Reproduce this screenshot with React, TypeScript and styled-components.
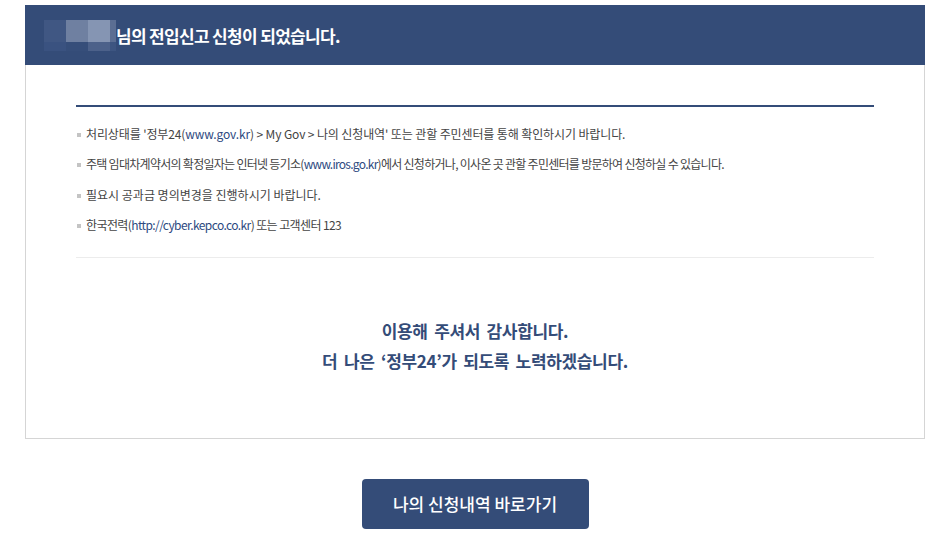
import styled, { createGlobalStyle } from 'styled-components';

const GlobalStyle = createGlobalStyle`
    html, body {
        margin: 0;
        padding: 0;
        background: #fff;
    }

    body {
        font-family: 'Noto Sans CJK KR', 'Noto Sans', sans-serif;
    }
`;

const Page = styled.div`
    width: 900px;
    margin: 5px 0 0 25px;
`;

const TitleBar = styled.div`
    display: flex;
    align-items: center;
    height: 60px;
    padding-left: 19px;
    background-color: #344c78;
`;

const Mosaic = styled.div`
    display: grid;
    grid-template-columns: 22px 22px 22px 6px;
    grid-template-rows: 22px 9px;
    margin-top: 1px;
`;

const MosaicCell = styled.span<{ $tone: string }>`
    background-color: ${(p) => p.$tone};
`;

const Title = styled.h1`
    margin: 0;
    font-size: 17px;
    font-weight: 700;
    letter-spacing: -0.04em;
    color: #fff;
`;

const Body = styled.div`
    padding: 40px 50px 62px;
    border: 1px solid #d5d5d5;
    border-top: none;
`;

const NoticeList = styled.ul`
    list-style: none;
    margin: 0;
    padding: 12px 0 16px;
    border-top: 2px solid #344c78;
    border-bottom: 1px solid #ececec;
`;

const NoticeItem = styled.li<{ $spacing: string }>`
    position: relative;
    padding-left: 10px;
    font-size: 12px;
    line-height: 30.4px;
    letter-spacing: ${(p) => p.$spacing};
    color: #444;

    &::before {
        content: '';
        position: absolute;
        left: 1px;
        top: 14px;
        width: 4px;
        height: 4px;
        background-color: #c4c4c4;
    }
`;

const Site = styled.span`
    color: #2e4a7f;
`;

const Thanks = styled.p`
    margin: 0;
    padding-top: 58px;
    text-align: center;
    font-size: 17px;
    font-weight: 700;
    line-height: 30px;
    letter-spacing: -0.02em;
    word-spacing: 3px;
    color: #344c78;
`;

const Footer = styled.div`
    display: flex;
    justify-content: center;
    padding-top: 40px;
`;

const HistoryButton = styled.button`
    width: 227px;
    height: 50px;
    border: none;
    border-radius: 4px;
    background-color: #344c78;
    font-family: 'Noto Sans CJK KR', 'Noto Sans', sans-serif;
    font-size: 17px;
    font-weight: 500;
    letter-spacing: 0;
    color: #fff;
    cursor: pointer;
`;

const mosaicTones = [
    '#405783', '#6f80a1', '#8595b3', '#5b6e93',
    '#3a5280', '#364e7a', '#4c618a', '#3d5581',
];

export default function App() {
    return (
        <>
            <GlobalStyle />
            <Page>
                <TitleBar>
                    <Mosaic>
                        {mosaicTones.map((tone, i) => (
                            <MosaicCell key={i} $tone={tone} />
                        ))}
                    </Mosaic>
                    <Title>님의 전입신고 신청이 되었습니다.</Title>
                </TitleBar>
                <Body>
                    <NoticeList>
                        <NoticeItem $spacing="-0.01em">
                            처리상태를 '정부24(<Site>www.gov.kr</Site>) &gt; My Gov &gt; 나의 신청내역' 또는 관할 주민센터를 통해 확인하시기 바랍니다.
                        </NoticeItem>
                        <NoticeItem $spacing="-0.06em">
                            주택 임대차계약서의 확정일자는 인터넷 등기소(<Site>www.iros.go.kr</Site>)에서 신청하거나, 이사온 곳 관할 주민센터를 방문하여 신청하실 수 있습니다.
                        </NoticeItem>
                        <NoticeItem $spacing="0">필요시 공과금 명의변경을 진행하시기 바랍니다.</NoticeItem>
                        <NoticeItem $spacing="-0.05em">
                            한국전력(<Site>http://cyber.kepco.co.kr</Site>) 또는 고객센터 123
                        </NoticeItem>
                    </NoticeList>
                    <Thanks>
                        이용해 주셔서 감사합니다.
                        <br />
                        더 나은 ‘정부24’가 되도록 노력하겠습니다.
                    </Thanks>
                </Body>
                <Footer>
                    <HistoryButton type="button">나의 신청내역 바로가기</HistoryButton>
                </Footer>
            </Page>
        </>
    );
}
